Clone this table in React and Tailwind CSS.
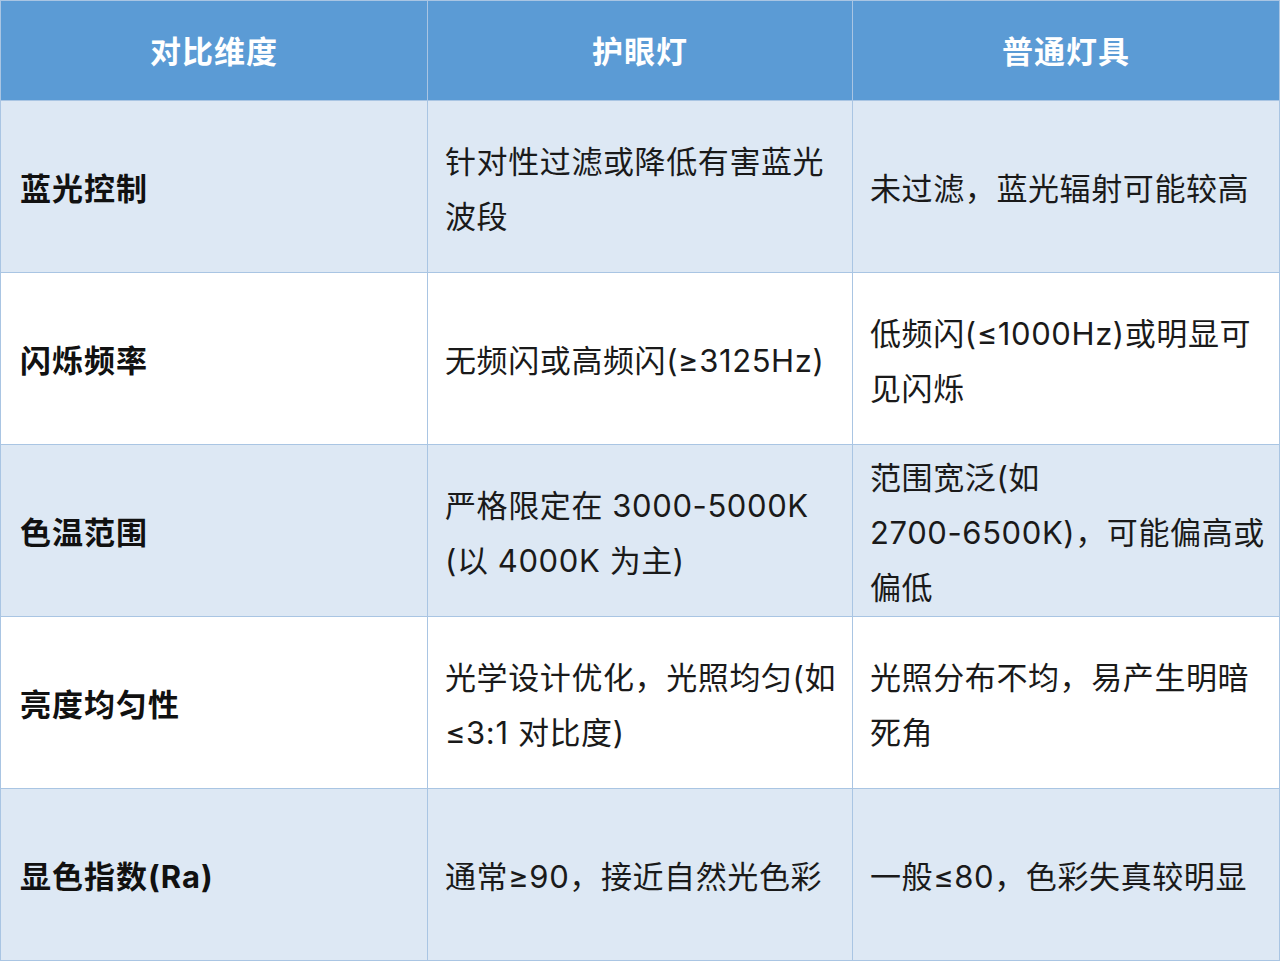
import React from "react";

const rows = [
  { label: "蓝光控制", eye: ["针对性过滤或降低有害蓝光", "波段"], normal: ["未过滤，蓝光辐射可能较高"] },
  { label: "闪烁频率", eye: ["无频闪或高频闪(≥3125Hz)"], normal: ["低频闪(≤1000Hz)或明显可", "见闪烁"] },
  { label: "色温范围", eye: ["严格限定在 3000-5000K", "(以 4000K 为主)"], normal: ["范围宽泛(如", "2700-6500K)，可能偏高或", "偏低"] },
  { label: "亮度均匀性", eye: ["光学设计优化，光照均匀(如", "≤3:1 对比度)"], normal: ["光照分布不均，易产生明暗", "死角"] },
  { label: "显色指数(Ra)", eye: ["通常≥90，接近自然光色彩"], normal: ["一般≤80，色彩失真较明显"] },
];

const Lines = ({ lines }) =>
  lines.map((l, i) => (
    <div key={i} className="whitespace-nowrap">
      {l}
    </div>
  ));

export default function App() {
  return (
    <div
      className="w-[1280px] h-[964px] bg-white"
      style={{ fontFamily: 'Inter, "Noto Sans CJK SC", sans-serif' }}
    >
      <table className="w-[1279px] table-fixed border-collapse">
        <colgroup>
          <col className="w-[427px]" />
          <col className="w-[425px]" />
          <col className="w-[427px]" />
        </colgroup>
        <thead>
          <tr className="h-[100px] bg-[#5b9bd5]">
            {["对比维度", "护眼灯", "普通灯具"].map((h) => (
              <th
                key={h}
                className="border border-[#a9c5e3] pt-1 text-center text-white text-[31px] font-bold tracking-[1px]"
              >
                {h}
              </th>
            ))}
          </tr>
        </thead>
        <tbody>
          {rows.map((r, i) => (
            <tr key={r.label} className={i % 2 === 0 ? "h-[172px] bg-[#dde8f4]" : "h-[172px] bg-white"}>
              <td className="border border-[#a9c5e3] pt-1 pl-[19px] pr-4 text-[31px] font-bold text-[#111] leading-[55px] tracking-[1px]">
                {r.label}
              </td>
              <td className="border border-[#a9c5e3] pt-1 pl-[17px] pr-2 text-[31px] text-[#1a1a1a] leading-[55px] tracking-[0.6px]">
                <Lines lines={r.eye} />
              </td>
              <td className="border border-[#a9c5e3] pt-1 pl-[17px] pr-2 text-[31px] text-[#1a1a1a] leading-[55px] tracking-[0.6px]">
                <Lines lines={r.normal} />
              </td>
            </tr>
          ))}
        </tbody>
      </table>
    </div>
  );
}
